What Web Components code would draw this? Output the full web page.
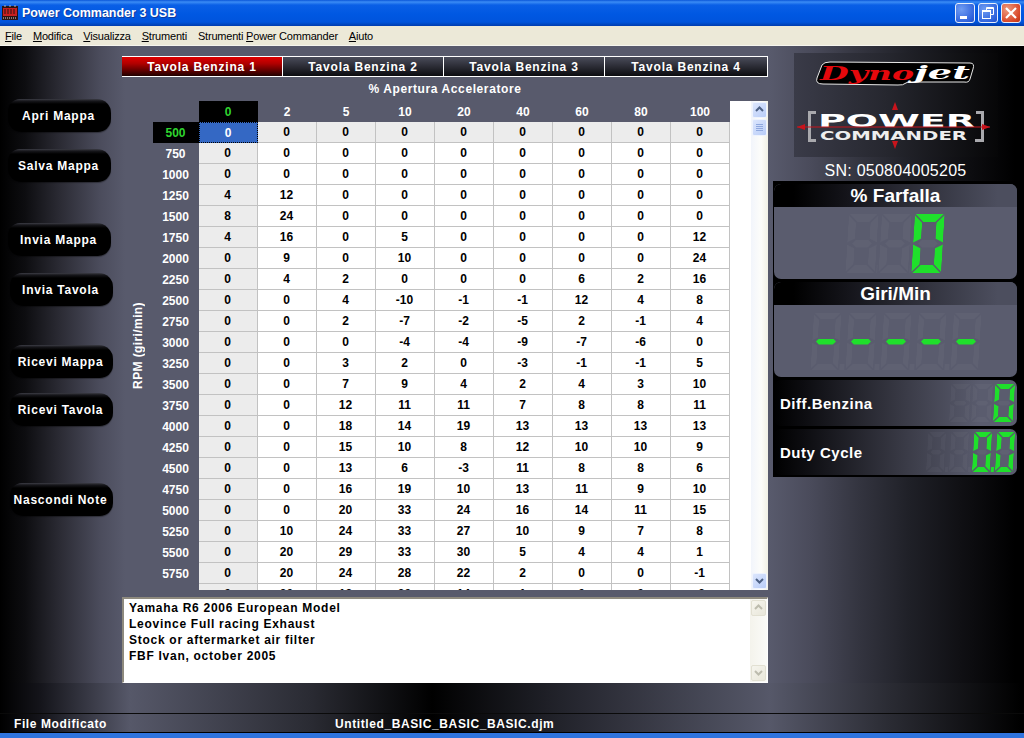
<!doctype html>
<html lang="it">
<head>
<meta charset="utf-8">
<title>Power Commander 3 USB</title>
<style>
  html, body { margin: 0; height: 100%; overflow: hidden; background: #000; }
</style>
</head>
<body>
<pc-app></pc-app>
<script>
const html = String.raw;
const FONT = `"Liberation Sans", Arial, sans-serif`;

class XpTitlebar extends HTMLElement {
  constructor() {
    super();
    this.attachShadow({ mode: "open" });
    this.shadowRoot.innerHTML = html`
      <style>
        :host {
          display: flex;
          align-items: center;
          height: 26px;
          box-sizing: border-box;
          padding: 0 3px 0 2px;
          background: linear-gradient(#0a56d8 0, #3b8cf5 2px, #0a5fe6 5px, #0058e2 14px, #0054dc 22px, #0049c4 24px, #003caf 26px);
          color: #fff;
          font: bold 12.5px ${FONT};
        }
        svg.icon { margin-right: 4px; flex: none; }
        span { flex: 1; text-shadow: 1px 1px 0 #0f3a9c; }
        .btns { display: flex; gap: 3px; }
        .btn {
          width: 20px;
          height: 20px;
          box-sizing: border-box;
          border: 1px solid #e8effc;
          border-radius: 3px;
          background: radial-gradient(circle at 30% 30%, #6f9cf2, #2f62dc 75%, #2450c4);
        }
        .btn svg { display: block; }
        .close { background: radial-gradient(circle at 30% 30%, #ee9a7e, #d9492a 70%, #bb3313); }
      </style>
      <svg class="icon" width="16" height="16" viewBox="0 0 16 16">
        <rect x="0" y="1" width="16" height="14" fill="#2a1414"/>
        <rect x="1" y="3" width="14" height="8" fill="#c81f1f"/>
        <path d="M3 4v5M6 4v5M9 4v5M12 4v5" stroke="#2a1414" stroke-width="1"/>
        <path d="M1 13h14" stroke="#d8d8d8" stroke-width="1" stroke-dasharray="1 1"/>
        <path d="M3 0v2M8 0v2M13 0v2" stroke="#b8b8b8"/>
      </svg>
      <span>Power Commander 3 USB</span>
      <div class="btns">
        <div class="btn"><svg width="18" height="18"><rect x="4" y="12" width="7" height="3" fill="#fff"/></svg></div>
        <div class="btn"><svg width="18" height="18" fill="none" stroke="#fff"><path d="M7.5 6.5V3.5h7v7h-3"/><path d="M7.5 4.5h7" /><rect x="3.5" y="6.5" width="8" height="8"/><path d="M3.5 7.5h8"/></svg></div>
        <div class="btn close"><svg width="18" height="18" stroke="#fff" stroke-width="2.2"><path d="M4 4l10 10M14 4L4 14"/></svg></div>
      </div>
    `;
  }
}
customElements.define("xp-titlebar", XpTitlebar);

class XpMenubar extends HTMLElement {
  constructor() {
    super();
    this.attachShadow({ mode: "open" });
    this.shadowRoot.innerHTML = html`
      <style>
        :host {
          display: flex;
          align-items: center;
          gap: 11px;
          height: 20px;
          box-sizing: border-box;
          padding-left: 5px;
          background: #ece9d8;
          border-bottom: 1px solid #f6f5ee;
          color: #000;
          font: 11px ${FONT};
          letter-spacing: -0.2px;
        }
      </style>
      <slot></slot>
    `;
  }
}
customElements.define("xp-menubar", XpMenubar);

class XpScrollbar extends HTMLElement {
  constructor() {
    super();
    this.attachShadow({ mode: "open" });
  }

  connectedCallback() {
    const chevUp = html`<svg width="15" height="15" fill="none" stroke-width="2"><path d="M4 9l3.5-3.5L11 9"/></svg>`;
    const chevDown = html`<svg width="15" height="15" fill="none" stroke-width="2"><path d="M4 6l3.5 3.5L11 6"/></svg>`;
    const thumb = this.hasAttribute("disabled") ? "" : html`
      <div class="btn thumb"><svg width="15" height="16" stroke="#8fa8de"><path d="M4 5.5h7M4 7.5h7M4 9.5h7M4 11.5h7"/></svg></div>`;
    this.shadowRoot.innerHTML = html`
      <style>
        :host {
          display: flex;
          flex-direction: column;
          width: 17px;
          box-sizing: border-box;
          padding: 1px;
          background: linear-gradient(90deg, #f2f5fb, #fdfdfa 60%, #f2f1e6);
        }
        :host([disabled]) { background: linear-gradient(90deg, #f4f3ec, #fbfbf8); }
        .btn {
          width: 15px;
          height: 16px;
          box-sizing: border-box;
          border: 1px solid #eef3fe;
          border-radius: 2px;
          background: linear-gradient(135deg, #dce6fd, #b9cdf8);
          stroke: #4d6185;
        }
        :host([disabled]) .btn {
          border-color: #e2e0d2;
          background: linear-gradient(135deg, #f6f5ee, #e9e7da);
          stroke: #bdbcae;
        }
        svg { display: block; margin: -1px; }
        .thumb { height: 17px; margin-top: 1px; }
        .fill { flex: 1; }
      </style>
      <div class="btn">${chevUp}</div>
      ${thumb}
      <div class="fill"></div>
      <div class="btn">${chevDown}</div>
    `;
  }
}
customElements.define("xp-scrollbar", XpScrollbar);

class PcButton extends HTMLElement {
  constructor() {
    super();
    this.attachShadow({ mode: "open" });
    this.shadowRoot.innerHTML = html`
      <style>
        :host {
          display: flex;
          align-items: center;
          justify-content: center;
          width: 103px;
          height: 33px;
          box-sizing: border-box;
          padding-right: 2px;
          border-radius: 12px 14px 13px 13px;
          background: linear-gradient(#3c3d46 0, #17171b 2px, #000 5px, #000 100%);
          box-shadow: 0 1px 1px rgba(0, 0, 0, .35);
          color: #fff;
          font: bold 12px ${FONT};
          letter-spacing: 0.75px;
          white-space: nowrap;
        }
      </style>
      <slot></slot>
    `;
  }
}
customElements.define("pc-button", PcButton);

class PcTabs extends HTMLElement {
  constructor() {
    super();
    this.attachShadow({ mode: "open" });
  }

  connectedCallback() {
    const tabs = this.getAttribute("tabs").split(",");
    this.shadowRoot.innerHTML = html`
      <style>
        :host {
          display: grid;
          grid-template-columns: 161px 161px 161px 163px;
          height: 21px;
        }
        div {
          display: flex;
          align-items: center;
          justify-content: center;
          box-sizing: border-box;
          border: 1px solid #fff;
          border-left-width: 0;
          background: linear-gradient(#4a4c5a, #0c0c10);
          color: #fff;
          font: bold 12px ${FONT};
          letter-spacing: 0.8px;
        }
        div:first-child { border-left-width: 1px; }
        .on { background: linear-gradient(#e00000, #b00000 35%, #200000); }
      </style>
      ${tabs.map((tab, i) => html`<div class="${i === 0 ? "on" : ""}">${tab}</div>`).join("")}
    `;
  }
}
customElements.define("pc-tabs", PcTabs);

const THROTTLE = [0, 2, 5, 10, 20, 40, 60, 80, 100];
const FUEL = [
  [500, 0, 0, 0, 0, 0, 0, 0, 0, 0],
  [750, 0, 0, 0, 0, 0, 0, 0, 0, 0],
  [1000, 0, 0, 0, 0, 0, 0, 0, 0, 0],
  [1250, 4, 12, 0, 0, 0, 0, 0, 0, 0],
  [1500, 8, 24, 0, 0, 0, 0, 0, 0, 0],
  [1750, 4, 16, 0, 5, 0, 0, 0, 0, 12],
  [2000, 0, 9, 0, 10, 0, 0, 0, 0, 24],
  [2250, 0, 4, 2, 0, 0, 0, 6, 2, 16],
  [2500, 0, 0, 4, -10, -1, -1, 12, 4, 8],
  [2750, 0, 0, 2, -7, -2, -5, 2, -1, 4],
  [3000, 0, 0, 0, -4, -4, -9, -7, -6, 0],
  [3250, 0, 0, 3, 2, 0, -3, -1, -1, 5],
  [3500, 0, 0, 7, 9, 4, 2, 4, 3, 10],
  [3750, 0, 0, 12, 11, 11, 7, 8, 8, 11],
  [4000, 0, 0, 18, 14, 19, 13, 13, 13, 13],
  [4250, 0, 0, 15, 10, 8, 12, 10, 10, 9],
  [4500, 0, 0, 13, 6, -3, 11, 8, 8, 6],
  [4750, 0, 0, 16, 19, 10, 13, 11, 9, 10],
  [5000, 0, 0, 20, 33, 24, 16, 14, 11, 15],
  [5250, 0, 10, 24, 33, 27, 10, 9, 7, 8],
  [5500, 0, 20, 29, 33, 30, 5, 4, 4, 1],
  [5750, 0, 20, 24, 28, 22, 2, 0, 0, -1],
  [6000, 0, 30, 18, 30, 14, 1, 0, 0, -2],
];

class FuelGrid extends HTMLElement {
  constructor() {
    super();
    this.attachShadow({ mode: "open" });
  }

  connectedCallback() {
    const head = THROTTLE.map((t, i) => html`<div class="${i === 0 ? "head hot" : "head"}">${t}</div>`).join("");
    const rows = FUEL.map(([rpm, ...values], r) => {
      const cells = values.map((v, c) => {
        let cls = "cell";
        if (r === 0 || c === 0) cls += " band";
        if (r === 0 && c === 0) cls += " sel";
        return html`<div class="${cls}">${v}</div>`;
      });
      return html`<div class="${r === 0 ? "head hot" : "head"}">${rpm}</div>${cells.join("")}`;
    }).join("");
    this.shadowRoot.innerHTML = html`
      <style>
        :host {
          display: flex;
          height: 489px;
          font: bold 12px ${FONT};
        }
        .axis {
          width: 31px;
          display: flex;
          align-items: center;
          justify-content: center;
          color: #fff;
          letter-spacing: 0.4px;
        }
        .axis span { writing-mode: vertical-rl; transform: rotate(180deg); }
        .clip { width: 577px; overflow: hidden; }
        .grid {
          display: grid;
          grid-template-columns: 46px repeat(9, 59px);
          grid-auto-rows: 21px;
        }
        .grid > div { display: flex; align-items: center; justify-content: center; box-sizing: border-box; }
        .head { color: #fff; padding-right: 1px; }
        .head.hot { background: #000; color: #2fd52f; }
        .corner { background: transparent; }
        .cell {
          background: #fff;
          color: #000;
          padding-right: 1px;
          border-right: 1px solid #c2c2c2;
          border-bottom: 1px solid #c2c2c2;
        }
        .band { background: #ececec; }
        .sel { background: #3468c4; color: #fff; border: 1px dotted #000; }
        .blank { flex: 1; background: #fff; }
      </style>
      <div class="axis"><span>RPM (giri/min)</span></div>
      <div class="clip"><div class="grid"><div class="corner"></div>${head}${rows}</div></div>
      <div class="blank"></div>
      <xp-scrollbar></xp-scrollbar>
    `;
  }
}
customElements.define("fuel-grid", FuelGrid);

class PcNotes extends HTMLElement {
  constructor() {
    super();
    this.attachShadow({ mode: "open" });
    this.shadowRoot.innerHTML = html`
      <style>
        :host {
          display: flex;
          height: 86px;
          box-sizing: border-box;
          background: #fff;
          border: 1px solid #fff;
          border-top: 2px solid #8e8a7e;
          border-left: 2px solid #8e8a7e;
          color: #000;
          font: bold 12px/16px ${FONT};
          letter-spacing: 0.72px;
        }
        .text { flex: 1; padding: 1px 5px; white-space: pre-line; }
      </style>
      <div class="text"><slot></slot></div>
      <xp-scrollbar disabled></xp-scrollbar>
    `;
  }
}
customElements.define("pc-notes", PcNotes);

const SEGMENTS = { 0: "abcdef", "-": "g", " ": "" };

class SegDisplay extends HTMLElement {
  constructor() {
    super();
    this.attachShadow({ mode: "open" });
  }

  connectedCallback() {
    const count = Number(this.getAttribute("digits"));
    const chars = [];
    for (const ch of this.getAttribute("value")) {
      if (ch === ".") chars[chars.length - 1].dot = true;
      else chars.push({ ch, dot: false });
    }
    while (chars.length < count) chars.unshift({ ch: " ", dot: false });
    this.setAttribute("role", "img");
    this.setAttribute("aria-label", this.getAttribute("value").trim());

    const digits = chars.map(({ ch, dot }, i) => {
      const lit = SEGMENTS[ch];
      const segs = [..."abcdefg"].map((s) => html`<i class="${s}${lit.includes(s) ? " on" : ""}"></i>`).join("");
      const point = i < count - 1 ? html`<b class="${dot ? "on" : ""}"></b>` : "";
      return html`<div class="digit">${segs}</div>${point}`;
    }).join("");

    this.shadowRoot.innerHTML = html`
      <style>
        :host {
          --t: ${this.getAttribute("t")}px;
          --w: ${this.getAttribute("w")}px;
          --h: ${this.getAttribute("h")}px;
          --gap: ${this.getAttribute("gap")}px;
          display: flex;
          transform: skewX(-3.5deg);
        }
        .digit {
          display: grid;
          flex: none;
          width: var(--w);
          height: var(--h);
          grid-template-columns: var(--t) 1fr var(--t);
          grid-template-rows: var(--t) 1fr var(--t) 1fr var(--t);
        }
        i { display: block; background: rgba(255, 255, 255, .03); }
        i.on, b.on { background: #1fe02b; }
        b { flex: none; width: var(--gap); height: var(--t); margin: 0 1px; align-self: flex-end; background: rgba(255, 255, 255, .03); }
        .a { grid-area: 1 / 1 / 2 / 4; clip-path: polygon(1px 0, calc(100% - 1px) 0, calc(100% - var(--t) - 1px) 100%, calc(var(--t) + 1px) 100%); }
        .g { grid-area: 3 / 1 / 4 / 4; clip-path: polygon(calc(var(--t) * .5 + 1px) 50%, calc(var(--t) + 1px) 0, calc(100% - var(--t) - 1px) 0, calc(100% - var(--t) * .5 - 1px) 50%, calc(100% - var(--t) - 1px) 100%, calc(var(--t) + 1px) 100%); }
        .d { grid-area: 5 / 1 / 6 / 4; clip-path: polygon(calc(var(--t) + 1px) 0, calc(100% - var(--t) - 1px) 0, calc(100% - 1px) 100%, 1px 100%); }
        .f { grid-area: 1 / 1 / 4 / 2; clip-path: polygon(0 1px, 100% calc(var(--t) + 1px), 100% calc(100% - var(--t) - 1px), 0 calc(100% - var(--t) * .5 - 1px)); }
        .b { grid-area: 1 / 3 / 4 / 4; clip-path: polygon(100% 1px, 0 calc(var(--t) + 1px), 0 calc(100% - var(--t) - 1px), 100% calc(100% - var(--t) * .5 - 1px)); }
        .e { grid-area: 3 / 1 / 6 / 2; clip-path: polygon(0 calc(var(--t) * .5 + 1px), 100% calc(var(--t) + 1px), 100% calc(100% - var(--t) - 1px), 0 calc(100% - 1px)); }
        .c { grid-area: 3 / 3 / 6 / 4; clip-path: polygon(100% calc(var(--t) * .5 + 1px), 0 calc(var(--t) + 1px), 0 calc(100% - var(--t) - 1px), 100% calc(100% - 1px)); }
      </style>
      ${digits}
    `;
  }
}
customElements.define("seg-display", SegDisplay);

class PcGauge extends HTMLElement {
  constructor() {
    super();
    this.attachShadow({ mode: "open" });
    this.shadowRoot.innerHTML = html`
      <style>
        :host {
          display: flex;
          flex-direction: column;
          height: 95px;
          border-radius: 7px;
          overflow: hidden;
          background: #5a5c6e;
        }
        .title {
          height: 23px;
          display: flex;
          align-items: center;
          justify-content: center;
          background: linear-gradient(90deg, #000 8%, #14141a 30%, #4c4e5e 92%);
          color: #fff;
          font: bold 19px ${FONT};
        }
        .body { flex: 1; display: flex; align-items: center; justify-content: var(--align, center); padding: var(--pad, 0); }
      </style>
      <div class="title"><slot name="title"></slot></div>
      <div class="body"><slot></slot></div>
    `;
  }
}
customElements.define("pc-gauge", PcGauge);

class PcReadout extends HTMLElement {
  constructor() {
    super();
    this.attachShadow({ mode: "open" });
    this.shadowRoot.innerHTML = html`
      <style>
        :host {
          display: flex;
          align-items: center;
          justify-content: space-between;
          height: 46px;
          box-sizing: border-box;
          padding: 0 3px 0 6px;
          border-radius: 7px;
          background: linear-gradient(90deg, #000 0, #0c0c10 12%, #3b3c48 55%, #5a5c6e 85%);
          color: #fff;
          font: bold 15px ${FONT};
          letter-spacing: 0.5px;
        }
      </style>
      <slot name="label"></slot>
      <slot></slot>
    `;
  }
}
customElements.define("pc-readout", PcReadout);

class PcLogo extends HTMLElement {
  constructor() {
    super();
    this.attachShadow({ mode: "open" });
    this.shadowRoot.innerHTML = html`
      <style>
        :host {
          display: block;
          width: 204px;
          height: 104px;
          margin-left: 21px;
          background: linear-gradient(90deg, #3a3b48, #26272f 45%, #060607);
        }
        svg { display: block; }
      </style>
      <svg width="204" height="104" viewBox="0 0 204 104">
        <path d="M28 12 Q30 9 36 9 L176 10 Q181 10 179 16 L176 26 Q175 30 170 29 L114 29 Q108 33 104 32 L29 31 Q21 31 23 25 Z" fill="#000" stroke="#e8e8e8" stroke-width="1"/>
        <text x="26" y="27" font-family="DejaVu Serif" font-weight="bold" font-style="italic" font-size="19" textLength="94" lengthAdjust="spacingAndGlyphs" fill="#e5080c">Dyno</text>
        <text x="120" y="26" font-family="DejaVu Serif" font-weight="bold" font-style="italic" font-size="19" textLength="56" lengthAdjust="spacingAndGlyphs" fill="#fff">jet</text>
        <path d="M14 58V89H22V86H17V61H22V58Z M182 58V61H187V86H181V89H190V58Z" fill="#a9a9ad"/>
        <text x="24" y="74" font-family="DejaVu Sans" font-weight="bold" font-size="18" textLength="157" lengthAdjust="spacingAndGlyphs" fill="#fff">POWER</text>
        <text x="26" y="87" font-family="DejaVu Sans" font-weight="bold" font-size="13" textLength="147" lengthAdjust="spacingAndGlyphs" fill="#eee">COMMANDER</text>
        <path d="M3 74H196" stroke="#c8141c" stroke-width="1.2"/>
        <path d="M3 74l8-3v6z M196 74l-8-3v6z M101 49l3 8h-6z M101 96l3-8h-6z" fill="#c8141c"/>
      </svg>
    `;
  }
}
customElements.define("pc-logo", PcLogo);

class PcApp extends HTMLElement {
  constructor() {
    super();
    this.attachShadow({ mode: "open" });
    this.shadowRoot.innerHTML = html`
      <style>
        :host {
          --dip: linear-gradient(90deg, #000 0, #14141a 40px, #565869 130px, #2a2b33 310px, #000 432px, #22232b 560px, #565869 770px, #2a2b33 890px, #000 1020px);
          display: flex;
          flex-direction: column;
          height: 738px;
          font-family: ${FONT};
        }
        main {
          flex: 1;
          display: flex;
          background:
            var(--dip) bottom / 100% 30px no-repeat,
            linear-gradient(90deg, #000 0, #0d0d10 25px, #2b2b34 60px, #4b4c5c 100px, #585a6c 125px, #585a6c 770px, #4a4b5b 810px, #33343f 860px, #1f2027 910px, #101014 960px, #000 1015px);
        }
        .side { width: 122px; padding: 53px 0 0 8px; box-sizing: border-box; display: flex; flex-direction: column; align-items: flex-start; }
        .center { width: 646px; padding-top: 10px; box-sizing: border-box; display: flex; flex-direction: column; }
        .throttle {
          height: 24px;
          display: flex;
          align-items: center;
          justify-content: center;
          color: #fff;
          font: bold 12px ${FONT};
          letter-spacing: 0.6px;
        }
        pc-notes { margin-top: 7px; }
        .right { flex: 1; padding: 7px 6px 0 5px; display: flex; flex-direction: column; }
        .sn { margin-top: 4px; height: 20px; text-align: center; color: #fff; font: 16px/20px ${FONT}; letter-spacing: 0.25px; }
        .gauges { display: flex; flex-direction: column; gap: 3px; padding: 3px 1px 2px; background: #000; }
        pc-gauge.throttle-gauge { --align: flex-end; --pad: 0 74px 0 0; }
        .status {
          height: 20px;
          box-sizing: border-box;
          display: grid;
          grid-template-columns: 321px 1fr;
          align-items: center;
          padding: 1px 0 0 14px;
          border-top: 1px solid #0a0a0a;
          border-bottom: 1px solid #000;
          background: var(--dip);
          color: #fff;
          font: bold 12px ${FONT};
          letter-spacing: 0.6px;
        }
        .edge { height: 5px; background: #2f74de; }
      </style>
      <xp-titlebar></xp-titlebar>
      <xp-menubar>
        <span><u>F</u>ile</span>
        <span><u>M</u>odifica</span>
        <span><u>V</u>isualizza</span>
        <span><u>S</u>trumenti</span>
        <span>Strumenti <u>P</u>ower Commander</span>
        <span><u>A</u>iuto</span>
      </xp-menubar>
      <main>
        <div class="side">
          <pc-button>Apri Mappa</pc-button>
          <pc-button style="margin-top:17px">Salva Mappa</pc-button>
          <pc-button style="margin-top:41px">Invia Mappa</pc-button>
          <pc-button style="margin:17px 0 0 2px">Invia Tavola</pc-button>
          <pc-button style="margin:39px 0 0 2px">Ricevi Mappa</pc-button>
          <pc-button style="margin:15px 0 0 2px">Ricevi Tavola</pc-button>
          <pc-button style="margin:57px 0 0 2px">Nascondi Note</pc-button>
        </div>
        <div class="center">
          <pc-tabs tabs="Tavola Benzina 1,Tavola Benzina 2,Tavola Benzina 3,Tavola Benzina 4"></pc-tabs>
          <div class="throttle">% Apertura Acceleratore</div>
          <fuel-grid></fuel-grid>
          <pc-notes>Yamaha R6 2006 European Model
Leovince Full racing Exhaust
Stock or aftermarket air filter
FBF Ivan, october 2005</pc-notes>
        </div>
        <div class="right">
          <pc-logo></pc-logo>
          <div class="sn">SN: 050804005205</div>
          <div class="gauges">
            <pc-gauge class="throttle-gauge">
              <span slot="title">% Farfalla</span>
              <seg-display value="0" digits="3" w="30" h="59" t="8" gap="1"></seg-display>
            </pc-gauge>
            <pc-gauge>
              <span slot="title">Giri/Min</span>
              <seg-display value="-----" digits="5" w="28" h="57" t="6" gap="5"></seg-display>
            </pc-gauge>
            <pc-readout>
              <span slot="label">Diff.Benzina</span>
              <seg-display value="0" digits="3" w="20" h="38" t="5" gap="0"></seg-display>
            </pc-readout>
            <pc-readout>
              <span slot="label">Duty Cycle</span>
              <seg-display value="0.0" digits="4" w="18" h="40" t="5" gap="3"></seg-display>
            </pc-readout>
          </div>
        </div>
      </main>
      <div class="status"><span>File Modificato</span><span>Untitled_BASIC_BASIC_BASIC.djm</span></div>
      <div class="edge"></div>
    `;
  }
}
customElements.define("pc-app", PcApp);
</script>
</body>
</html>
